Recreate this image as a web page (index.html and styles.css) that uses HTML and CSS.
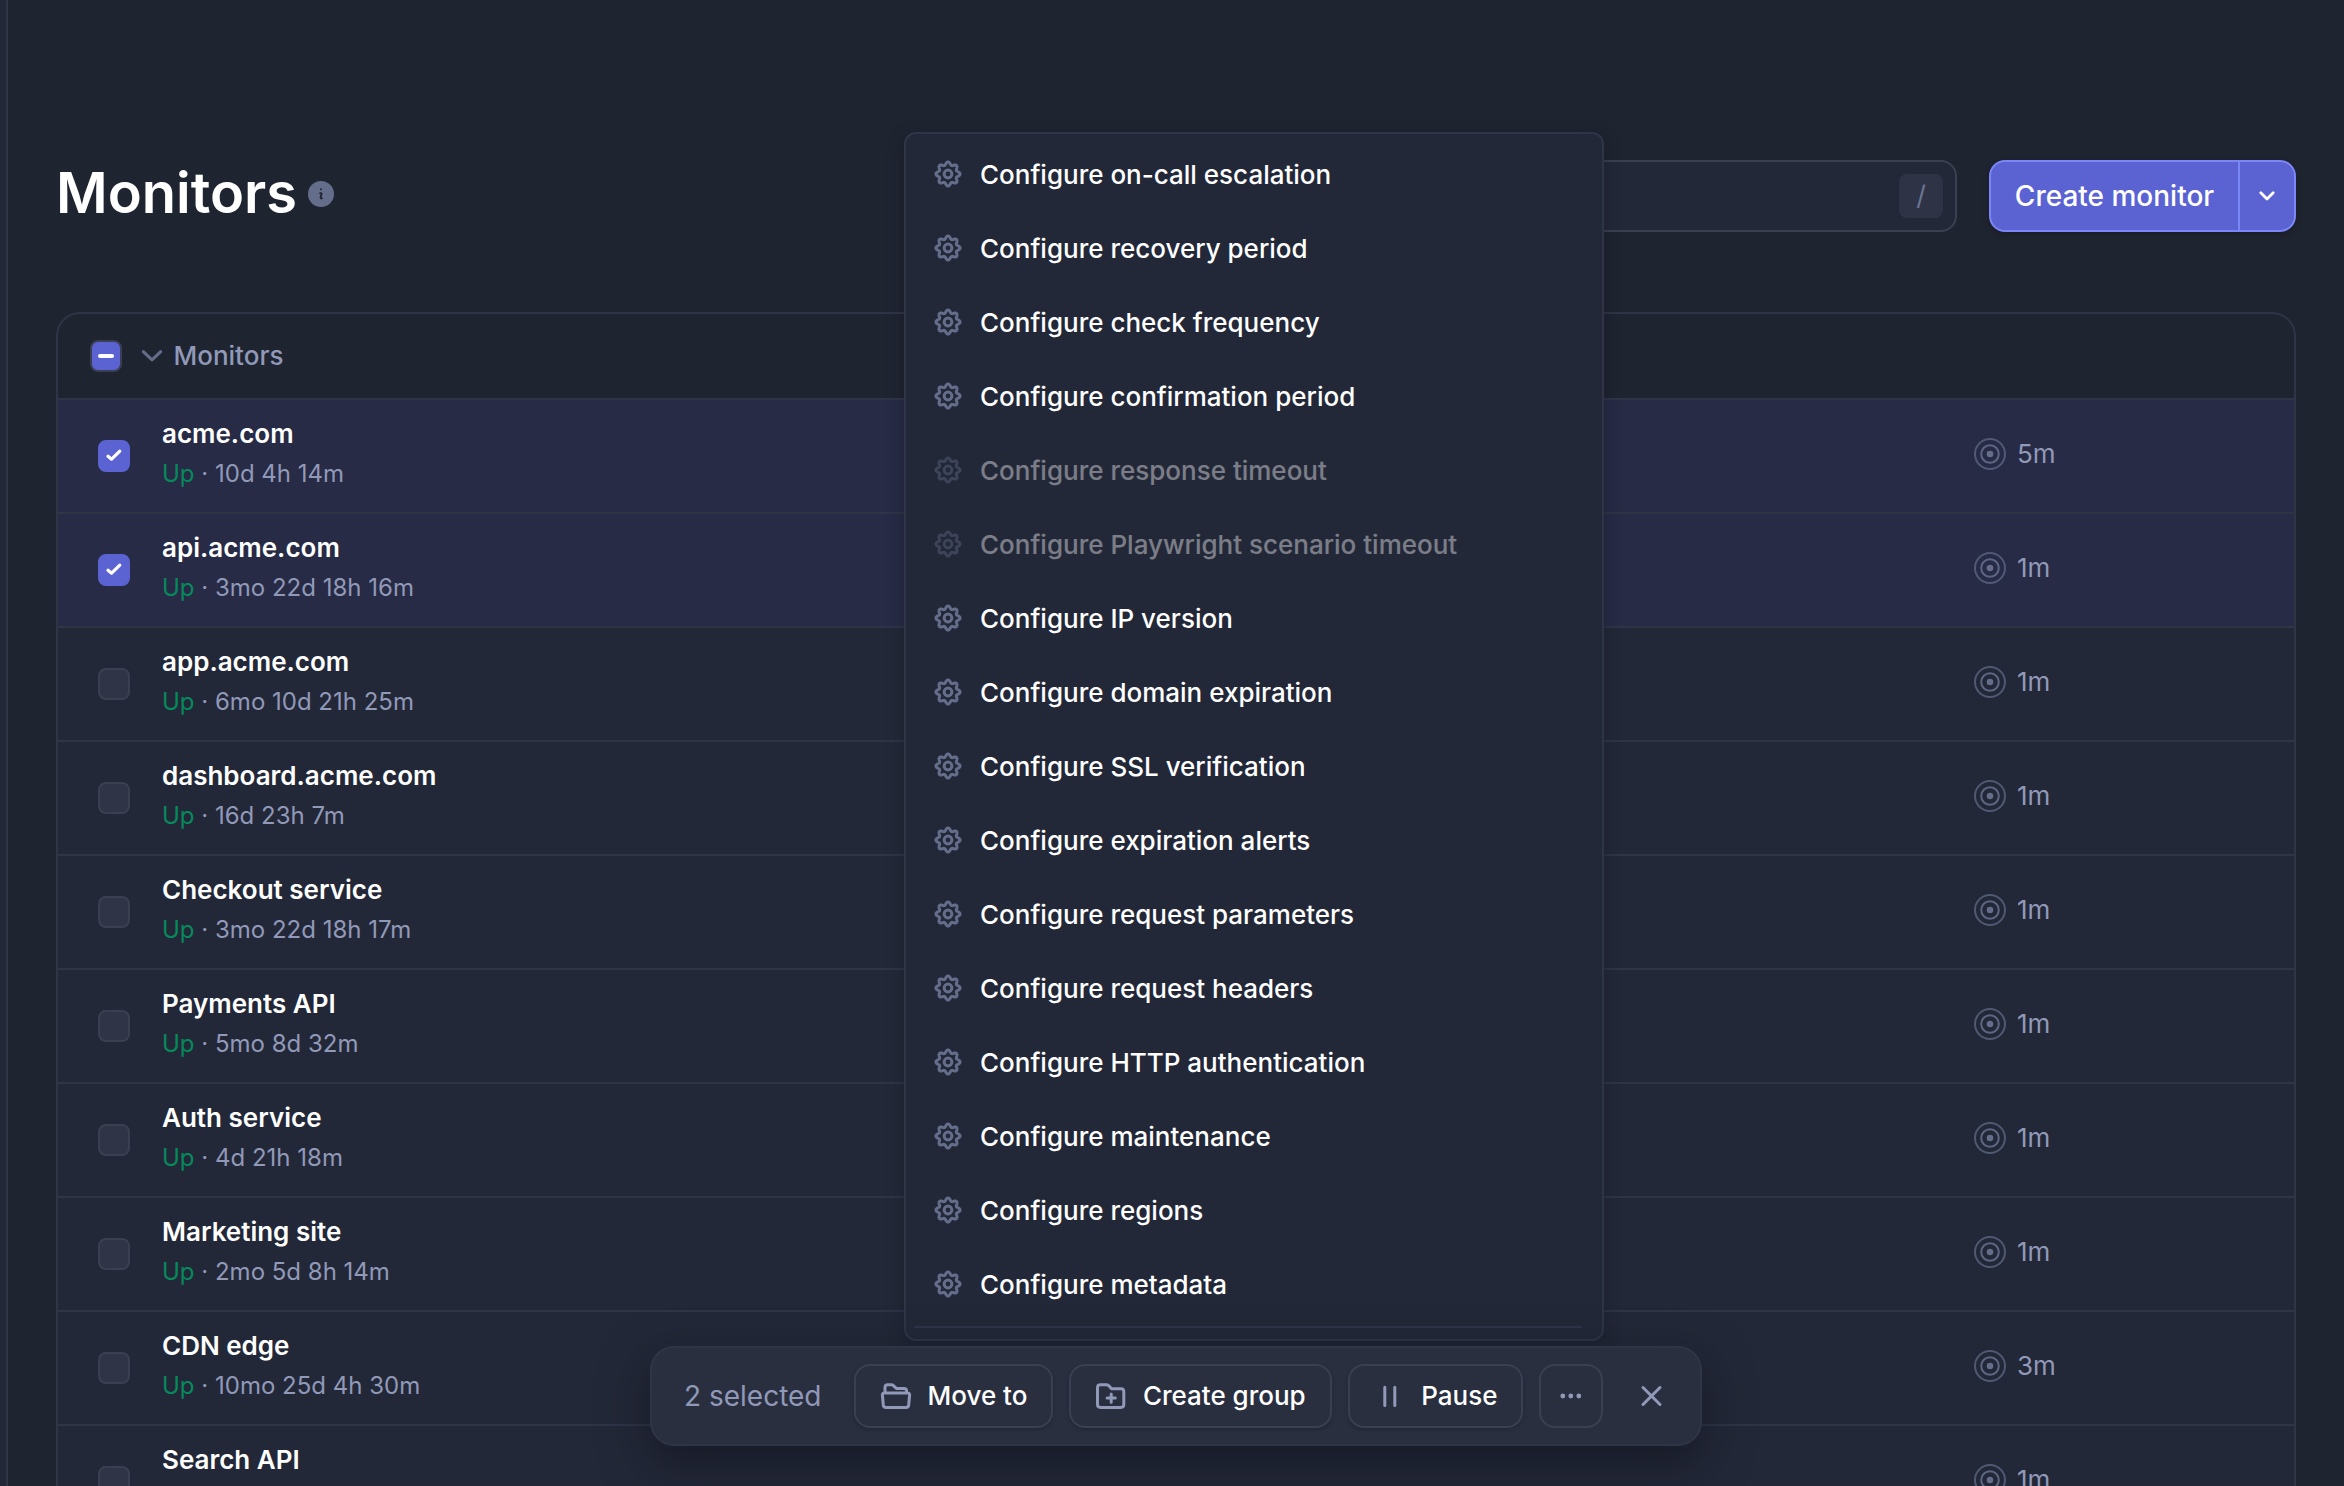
FILE: index.html
```
<!DOCTYPE html>
<html lang="en">
<head>
<meta charset="utf-8">
<title>Monitors</title>
<link rel="stylesheet" href="styles.css">
</head>
<body>
<svg class="sprite" aria-hidden="true">
  <symbol id="gear" viewBox="0 0 28 28">
    <path id="gear-teeth" d=""/>
    <circle cx="14" cy="14" r="3.9"/>
  </symbol>
  <symbol id="target" viewBox="0 0 32 32">
    <circle cx="16" cy="16" r="15" opacity=".7"/>
    <circle cx="16" cy="16" r="8.8" opacity=".9"/>
    <circle class="dot" cx="16" cy="16" r="3.3"/>
  </symbol>
  <symbol id="check" viewBox="0 0 32 32"><path d="M10 16.2L13.6 19.2L21.8 11.2"/></symbol>
</svg>
<div class="app">
  <aside class="sidebar"></aside>
  <main class="main">
    <header class="page-head">
      <h1 class="title">Monitors</h1>
      <svg class="info" viewBox="0 0 26 26"><circle cx="13" cy="13" r="13"/><path d="M13 8.1v.1M12.2 12.2q1.6-.2 1.3 1l-.9 2.8q-.2 1.6 1.3 1.4"/></svg>
      <div class="search"><kbd class="key">/</kbd></div>
      <div class="create"><button class="create-main">Create monitor</button><button class="create-more"><svg viewBox="0 0 20 20"><path d="M3.8 6.8L10 13L16.2 6.8"/></svg></button></div>
    </header>
    <section class="table">
      <div class="table-head">
        <span class="box box-mixed"></span>
        <svg class="chevron" viewBox="0 0 20 12"><path d="M1.3 1.6L10 9.8L18.7 1.6"/></svg>
        <span>Monitors</span>
      </div>
      <div id="rows"></div>
    </section>
  </main>
</div>
<div class="menu" id="menu"></div>
<div class="bar">
  <span class="count">2 selected</span>
  <button class="btn"><svg viewBox="0 0 32 32"><path d="M5 13V7.6q0-2.8 2.8-2.8h3.6q1.2 0 2 .8l2.9 2.8h7.7q2.6 0 2.6 2.6v2M4.6 12.9h22.8q2.4 0 2.2 2.3l-.9 9.8q-.3 2.4-2.7 2.4H6q-2.4 0-2.7-2.4l-.9-9.8q-.2-2.3 2.2-2.3z"/></svg>Move to</button>
  <button class="btn"><svg viewBox="0 0 32 32"><path d="M2.5 7.6q0-2.9 2.9-2.9h6q1.3 0 2.2.9l2.9 3.1h9.4q2.9 0 2.9 2.9v12.9q0 2.9-2.9 2.9H5.4q-2.9 0-2.9-2.9zM16.2 14v8.2M12.1 18.1h8.2"/></svg>Create group</button>
  <button class="btn"><svg viewBox="0 0 32 32"><path d="M10.8 7.2v18.4M20.8 7.2v18.4"/></svg>Pause</button>
  <button class="btn btn-square"><svg class="dots" viewBox="0 0 32 32"><circle cx="7.8" cy="16" r="2.4"/><circle cx="15.8" cy="16" r="2.4"/><circle cx="23.8" cy="16" r="2.4"/></svg></button>
  <button class="close"><svg viewBox="0 0 32 32"><path d="M8 7.5L25 24.5M25 7.5L8 24.5"/></svg></button>
</div>
<script src="app.js"></script>
</body>
</html>
```
FILE: styles.css
```
* { box-sizing: border-box; }
body {
  margin: 0;
  height: 1486px;
  overflow: hidden;
  background: #1f2431;
  color: #fff;
  font: 500 26px/40px Inter, "Liberation Sans", sans-serif;
}
button { margin: 0; padding: 0; border: 0; background: none; color: inherit; font: inherit; }
svg { display: block; flex: none; fill: none; stroke-linecap: round; stroke-linejoin: round; }
.sprite { position: absolute; width: 0; height: 0; }
.app { display: flex; height: 1486px; overflow: hidden; }
.sidebar { flex: none; width: 8px; background: #232838; border-right: 2px solid #2f3447; }
.main { flex: 1; padding: 160px 48px 0; }

.page-head { display: flex; align-items: center; height: 72px; margin-bottom: 80px; }
.title { margin: 0; font-size: 56px; font-weight: 600; line-height: 64px; transform: translateY(-3px); }
.info { width: 26px; height: 26px; margin: -4px 0 0 11px; fill: #646e8b; }
.info path { fill: none; stroke: #1f2431; stroke-width: 1.9; }
.search {
  display: flex; align-items: center; justify-content: flex-end;
  width: 600px; height: 72px; margin-left: auto; padding-right: 12px;
  background: #232838; border: 2px solid #3a3f52; border-radius: 16px;
}
.key {
  width: 44px; height: 44px; border-radius: 8px; background: #2e3346; color: #6b7592;
  font: 400 27px/44px Inter, sans-serif; text-align: center;
}
.create {
  display: flex; width: 307px; height: 72px; margin-left: 32px;
  background: #5b63d3; border: 2px solid #7c87f7; border-radius: 16px;
  box-shadow: 0 2px 6px rgba(0, 0, 0, .25);
  font-size: 28px;
}
.create-main { flex: 1; white-space: nowrap; }
.create-more { display: grid; place-items: center; width: 56px; border-left: 2px solid #7c87f7; }
.create-more svg { width: 20px; height: 20px; stroke: #fff; stroke-width: 2.8; }

.table { height: 1300px; border: 2px solid #2f3447; border-radius: 24px; overflow: hidden; }
.table-head {
  display: flex; align-items: center; height: 84px; padding-left: 32px;
  color: #9199b8;
}
.chevron { width: 20px; height: 12px; margin: 0 11.5px 0 20px; stroke: #646e8b; stroke-width: 3; }
.row {
  display: flex; align-items: center; height: 114px; padding-left: 40px;
  background: #232838; border-top: 2px solid #2f3447;
}
.row-selected { background: #272b45; }
.box { flex: none; width: 32px; height: 32px; border: 2px solid #3a3f52; border-radius: 8px; background: #2f3447; }
.box-on { border-color: #5b63d3; background: #5b63d3; }
.box-on svg { width: 32px; height: 32px; margin: -2px; stroke: #fff; stroke-width: 3.2; }
.box-mixed { display: grid; place-items: center; background: #5b63d3; }
.box-mixed::after { content: ""; width: 16px; height: 4px; border-radius: 2px; background: #fff; }
.names { flex: 1; padding: 0 0 4px 32px; }
.name { font-weight: 600; }
.status { color: #9199b8; font-size: 24px; font-weight: 400; }
.up { color: #068a5c; }
.period { display: flex; align-items: center; gap: 11px; width: 320px; padding-bottom: 4px; color: #9199b8; font-weight: 400; }
.period svg { width: 32px; height: 32px; stroke: #646e8b; stroke-width: 2; }
.dot { fill: #646e8b; stroke: none; }

.menu {
  position: absolute; left: 904px; top: 132px; width: 700px; height: 1209px; padding: 4px 20px 0 8px;
  background: #232838; border: 2px solid #2f3447; border-radius: 12px;
  box-shadow: 0 4px 16px rgba(15, 17, 28, .35);
}
.item { display: flex; align-items: center; gap: 18px; height: 74px; padding-left: 20px; }
.item svg { width: 28px; height: 28px; margin-top: -2px; stroke: #646e8b; stroke-width: 3; }
.item-off { opacity: .4; }
.menu-line { height: 2px; margin-top: 4px; background: #2f3447; }

.bar {
  position: absolute; left: 650px; top: 1346px; width: 1052px; height: 100px;
  display: flex; align-items: center; gap: 16px; padding-left: 32px;
  background: #2a2f40; border: 2px solid #2f3447; border-radius: 24px;
  box-shadow: 0 16px 48px rgba(10, 12, 20, .5);
}
.count { width: 154px; color: #9199b8; font-size: 28px; font-weight: 400; white-space: nowrap; }
.btn {
  display: flex; align-items: center; gap: 15.5px; height: 64px; padding: 0 24px;
  border: 2px solid #3a3f52; border-radius: 16px; white-space: nowrap;
  background: #2a2f40; box-shadow: 0 2px 4px rgba(0, 0, 0, .2);
}
.btn svg, .close svg { width: 32px; height: 32px; stroke: #9199b8; stroke-width: 3; }
.btn-square { width: 64px; padding: 0 14px; box-shadow: none; }
.btn .dots { fill: #9199b8; stroke: none; }
.close { display: grid; place-items: center; width: 64px; height: 64px; }
```
FILE: app.js
```
const teeth = [];
for (let i = 0; i <= 96; i++) {
  const a = i / 96 * Math.PI * 2;
  const r = 10.6 + 1.5 * Math.cos(a * 8);
  teeth.push((14 + r * Math.sin(a)).toFixed(2) + " " + (14 - r * Math.cos(a)).toFixed(2));
}
document.getElementById("gear-teeth").setAttribute("d", "M" + teeth.join("L") + "z");

const monitors = [
  ["acme.com", "10d 4h 14m", "5m", true],
  ["api.acme.com", "3mo 22d 18h 16m", "1m", true],
  ["app.acme.com", "6mo 10d 21h 25m", "1m"],
  ["dashboard.acme.com", "16d 23h 7m", "1m"],
  ["Checkout service", "3mo 22d 18h 17m", "1m"],
  ["Payments API", "5mo 8d 32m", "1m"],
  ["Auth service", "4d 21h 18m", "1m"],
  ["Marketing site", "2mo 5d 8h 14m", "1m"],
  ["CDN edge", "10mo 25d 4h 30m", "3m"],
  ["Search API", "", "1m"],
];
document.getElementById("rows").innerHTML = monitors.map(([name, time, period, on]) => `
  <div class="row${on ? " row-selected" : ""}">
    <span class="box${on ? " box-on" : ""}">${on ? '<svg><use href="#check"/></svg>' : ""}</span>
    <div class="names"><div class="name">${name}</div><div class="status">${time ? `<span class="up">Up</span> · ${time}` : "&nbsp;"}</div></div>
    <div class="period"><svg><use href="#target"/></svg>${period}</div>
  </div>`).join("");

const items = ["on-call escalation", "recovery period", "check frequency", "confirmation period",
  "response timeout", "Playwright scenario timeout", "IP version", "domain expiration",
  "SSL verification", "expiration alerts", "request parameters", "request headers",
  "HTTP authentication", "maintenance", "regions", "metadata"];
document.getElementById("menu").innerHTML = items.map(label =>
  `<div class="item${label.includes("timeout") ? " item-off" : ""}"><svg><use href="#gear"/></svg>Configure ${label}</div>`
).join("") + '<div class="menu-line"></div>';
```
